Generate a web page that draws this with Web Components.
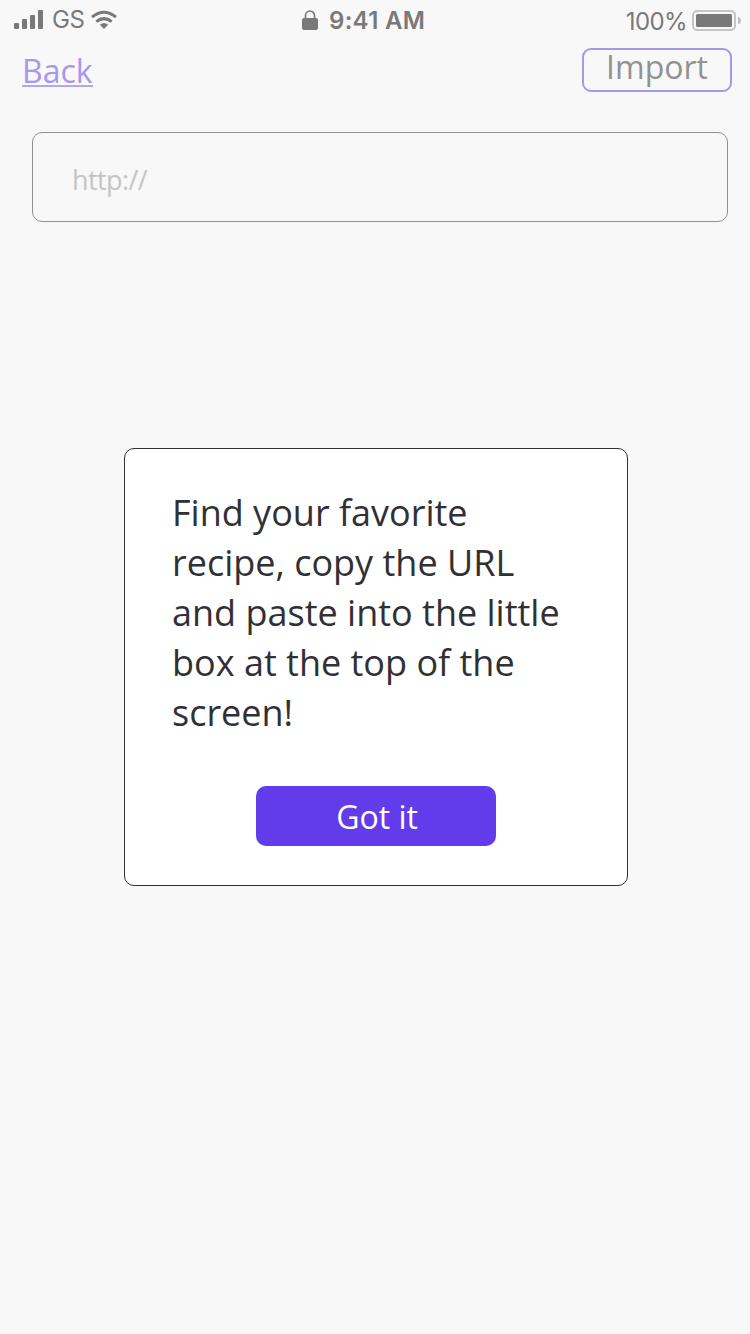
<!DOCTYPE html>
<html lang="en">
<head>
<meta charset="utf-8">
<title>Import recipe</title>
<style>
html,body{margin:0;height:100%}
body{background:#f8f8f8;font-family:"Open Sans","Noto Sans",sans-serif;overflow:hidden}
</style>
</head>
<body>
<import-screen></import-screen>
<script>
const define=(name,html)=>{
  const t=document.createElement('template');
  t.innerHTML=html;
  customElements.define(name,class extends HTMLElement{
    constructor(){super();this.attachShadow({mode:'open'}).append(t.content.cloneNode(true));}
  });
};

define('status-bar',`
<style>
:host{display:grid;grid-template-columns:287px auto 1fr;height:40px;box-sizing:border-box;padding:0 9px 0 14px;font-family:Inter,sans-serif;color:#797979;line-height:40px;white-space:nowrap}
div{display:flex;height:40px}
svg{display:block;flex:none}
.left{font-size:24px}
.time{font-size:24px;font-weight:600;letter-spacing:.3px}
.right{justify-content:flex-end;font-size:24px}
.left span{margin-left:9px;line-height:39px;letter-spacing:-.3px}
.time span{margin-left:10px;line-height:41px}
.right span{margin-right:5px;line-height:43px;letter-spacing:-.6px}
</style>
<div class="left">
<svg width="29" height="40" viewBox="14 0 29 40" fill="#797979"><rect x="14" y="23" width="5" height="6" rx="1"/><rect x="22" y="19" width="5" height="10" rx="1"/><rect x="30" y="15" width="5" height="14" rx="1"/><rect x="38" y="10" width="5" height="19" rx="1"/></svg>
<span>GS</span>
<svg style="margin-left:6px" width="26" height="40" viewBox="91 0 26 40" fill="none" stroke="#797979" stroke-width="3"><path d="M92 17.200Q104 7.200 116 17.200M96.300 21.700Q104 15.500 111.700 21.700"/><path stroke="none" fill="#797979" d="M99.900 24.800Q104 21.300 108.100 24.800L104 29Z"/></svg>
</div>
<div class="time">
<svg width="18" height="40" viewBox="301 0 18 40"><path d="M305.500 20v-4.500a4.500 4.500 0 0 1 9 0V20" fill="none" stroke="#797979" stroke-width="1.700"/><rect x="302" y="18" width="16" height="12" rx="2" fill="#797979"/></svg>
<span>9:41 AM</span>
</div>
<div class="right"><span>100%</span>
<svg width="49" height="40" viewBox="692 0 49 40"><rect x="693" y="11" width="42" height="19" rx="4" fill="none" stroke="#c5c5c5" stroke-width="2"/><rect x="696" y="14" width="36" height="13" rx="1.500" fill="#797979"/><path d="M738 16.500q3 1.500 3 4t-3 4z" fill="#bdbdbd"/></svg></div>`);

define('nav-bar',`
<style>
:host{display:flex;justify-content:space-between;align-items:flex-start;height:92px;box-sizing:border-box;padding:8px 18px 0 22px;font-size:32px;line-height:44px}
.back{color:#a897ee;border-bottom:2px solid #b5a5f2;line-height:46px;height:37px;white-space:nowrap}
.import{box-sizing:border-box;width:150px;height:44px;border:2px solid #a697eb;border-radius:9px;color:#929292;text-align:center;line-height:34px}
</style>
<div class="back"><slot name="back"></slot></div>
<div class="import"><slot name="action"></slot></div>`);

define('url-field',`
<style>
:host{display:flex;align-items:center;box-sizing:border-box;height:90px;margin:0 22px 0 32px;padding:5px 39px 0;border:1px solid #929292;border-radius:10px;color:#c4c4c4;font-size:27px;letter-spacing:-.6px}
</style><slot></slot>`);

define('primary-button',`
<style>
:host{display:block;box-sizing:border-box;width:240px;height:60px;margin:0 auto;padding-left:2px;border-radius:10px;background:#623cea;color:#fff;font-size:32px;line-height:61px;text-align:center}
</style><slot></slot>`);

define('tip-dialog',`
<style>
:host{display:block;box-sizing:border-box;width:504px;height:438px;margin:226px 0 0 124px;padding:39px 47px 0;background:#fff;border:1px solid #303035;border-radius:10px;color:#303035}
p{margin:0 0 48px;font-size:36px;line-height:50px}
</style><p><slot></slot></p><slot name="action"></slot>`);

define('import-screen',`
<style>:host{display:block;width:750px;height:1334px;background:#f8f8f8}</style>
<status-bar></status-bar>
<nav-bar><span slot="back">Back</span><span slot="action">Import</span></nav-bar>
<url-field>http://</url-field>
<tip-dialog>Find your favorite<br>recipe, copy the URL<br>and paste into the little<br>box at the top of the<br>screen!<primary-button slot="action">Got it</primary-button></tip-dialog>`);
</script>
</body>
</html>
